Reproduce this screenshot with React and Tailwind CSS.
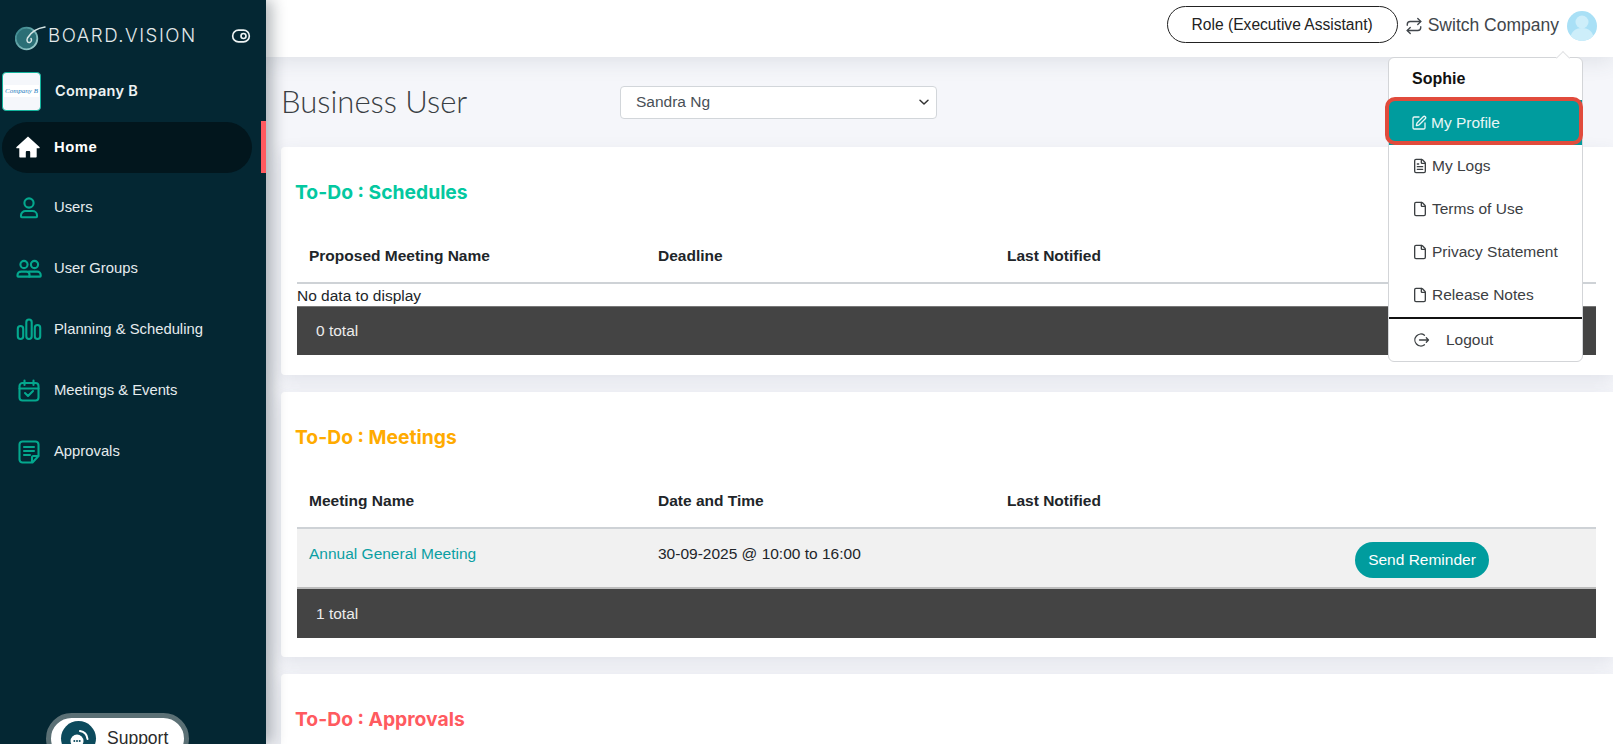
import React from "react";
import { Repeat, SquarePen, FileText, File, ToggleRight } from "lucide-react";

const teal = "#04a88e";
const Ic = ({ children, w = 26, h = 26 }) => (
  <svg width={w} height={h} viewBox="0 0 26 26" fill="none" stroke={teal} strokeWidth="2.1" strokeLinecap="round" strokeLinejoin="round">{children}</svg>
);
const UserIcon = () => (
  <Ic><circle cx="13" cy="8" r="4.6" /><path d="M5 21.5v-1.2c0-2.6 2.2-4.3 4.5-4.3h7c2.3 0 4.5 1.7 4.5 4.3v1.2c0 .4-.3.7-.7.7H5.7c-.4 0-.7-.3-.7-.7z" /></Ic>
);
const GroupIcon = () => (
  <Ic><circle cx="8" cy="8.5" r="3.6" /><circle cx="18.5" cy="8.5" r="3.6" /><path d="M1.5 20v-1c0-2 1.6-3.4 3.6-3.4h5.4c1.8 0 3 1.4 3 3.2V20.6H2.100c-.3 0-.6-.3-.6-.6z" /><path d="M13 15.600h8.200c1.900 0 3.500 1.400 3.500 3.400v1c0 .3-.3.6-.6.6H13" /></Ic>
);
const BarsIcon = () => (
  <Ic><rect x="1.800" y="9" width="5.400" height="13" rx="2.700" /><rect x="10.300" y="2.500" width="5.400" height="19.500" rx="2.700" /><rect x="18.800" y="8" width="5.400" height="14" rx="2.700" /></Ic>
);
const CalIcon = () => (
  <Ic><rect x="3.500" y="5" width="19" height="17.500" rx="3" /><path d="M3.500 10.500h19M8.500 2.500v4.500M17.500 2.500v4.500M9 15l3 3 5-5" /></Ic>
);
const NoteIcon = () => (
  <Ic><path d="M6.500 2.500h13c1.600 0 3 1.300 3 3V17l-6 6.500h-10c-1.600 0-3-1.300-3-3v-15c0-1.700 1.400-3 3-3z" /><path d="M8 8h10M8 12h10M8 16h6M16 23v-4.500c0-.8.6-1.500 1.400-1.500h4.800" /></Ic>
);
const HomeIcon = () => (
  <svg width="24" height="22" viewBox="0 0 24 22">
    <path fillRule="evenodd" fill="#ffffff" d="M12 .5 23.500 11c.5.5.2 1.300-.5 1.300h-2.300V20.500c0 .6-.4 1-1 1H4.300c-.6 0-1-.4-1-1V12.300H1c-.7 0-1-.8-.5-1.300zM9.800 21.500h4.400v-5.200c0-.7-.5-1.200-1.200-1.200h-2c-.7 0-1.200.5-1.200 1.200z" />
  </svg>
);

const NavRow = ({ icon, label }) => (
  <div className="h-[61px] flex items-center">
    <span className="w-[54px] flex justify-center pl-[3px]">{icon}</span>
    <span className="text-[14.8px] text-[#e6ecee]">{label}</span>
  </div>
);

const Th = ({ children, w }) => <div className={`${w} pl-3 font-bold text-[#212529]`}>{children}</div>;

const Head = ({ cols }) => (
  <div className="flex items-center h-[54px] border-b-2 border-[#ced2d6]">
    <Th w="w-[349px]">{cols[0]}</Th>
    <Th w="w-[349px]">{cols[1]}</Th>
    <Th w="flex-1">{cols[2]}</Th>
  </div>
);

const Total = ({ children, h = "h-[49px]" }) => (
  <div className={`${h} bg-[#444444] text-[#ececec] flex items-center pl-[19px]`}>{children}</div>
);

const Card = ({ title, color, h, children }) => (
  <section className={`${h} ml-[15px] bg-white rounded-l shadow-[0_6px_18px_rgba(60,70,100,0.10)] pl-4 pr-[17px]`}>
    <h2 className={`-ml-[2px] pt-[35px] h-[83px] font-['Inter',sans-serif] font-bold text-[19.3px] leading-[21px] ${color}`}>{title}</h2>
    <div>{children}</div>
  </section>
);

const MenuRow = ({ icon, label, h = "h-[43px]" }) => (
  <div className={`${h} flex items-center pl-[23px] gap-[4px] text-[#3c4043]`}>
    {icon}
    <span>{label}</span>
  </div>
);

export default function App() {
  return (
    <div className="flex h-[744px] w-[1613px] overflow-hidden bg-[#f5f6fa] font-['Liberation_Sans',Arial,sans-serif] text-[15.5px] text-[#212529]">
      <aside className="w-[266px] shrink-0 h-full overflow-hidden bg-[#042733] relative z-20 shadow-[6px_0_14px_rgba(20,30,40,0.32)] flex flex-col">
        <div className="h-[72px] shrink-0 flex items-center pl-[15px]">
          <svg width="32" height="32" viewBox="0 0 32 32" fill="none" className="shrink-0">
            <defs>
              <linearGradient id="lg" x1="0" y1="0" x2="1" y2="1">
                <stop offset="0" stopColor="#2f7f86" />
                <stop offset="1" stopColor="#a7d5d4" />
              </linearGradient>
            </defs>
            <circle cx="11.500" cy="18.500" r="10.800" fill="#2b6f76" stroke="url(#lg)" strokeWidth="1.800" />
            <path d="M30 7C23 8 16 12 12.500 18c-1.500 3 .5 5 2.200 4.500s2.300-2.500 1.300-4" stroke="#d7e6e6" strokeWidth="1.500" strokeLinecap="round" />
          </svg>
          <span className="ml-[1px] font-['Inter',sans-serif] font-light text-[#e3e9ea] text-[18.700px] tracking-[1.500px]">BOARD.VISION</span>
          <ToggleRight size={20} color="#eef3f3" strokeWidth={2} className="ml-[34px]" />
        </div>
        <div className="h-[38px] shrink-0 flex items-center pl-[2px]">
          <div className="w-[39px] h-[39px] bg-[#f5f7fb] border border-[#12b39c] rounded-sm flex items-center justify-center">
            <span className="font-['Liberation_Serif',serif] italic text-[7px] text-[#2a7fc0] bg-white px-[1px] leading-[12px]">Company B</span>
          </div>
          <span className="ml-[14px] font-['Inter',sans-serif] font-semibold text-[14.500px] tracking-[0.3px] text-[#eef3f3]">Company B</span>
        </div>
        <div className="mt-[11px] shrink-0 flex items-center relative">
          <div className="w-[250px] h-[51px] ml-[2px] rounded-[26px] bg-[#02161d] flex items-center">
            <span className="w-[52px] flex justify-center"><HomeIcon /></span>
            <span className="font-bold text-[14.800px] text-white tracking-[0.5px]">Home</span>
          </div>
          <div className="w-[5px] h-[52px] ml-[9px] bg-[#ff5a5f]" />
        </div>
        <nav className="mt-[4px] shrink-0">
          <NavRow icon={<UserIcon />} label="Users" />
          <NavRow icon={<GroupIcon />} label="User Groups" />
          <NavRow icon={<BarsIcon />} label="Planning & Scheduling" />
          <NavRow icon={<CalIcon />} label="Meetings & Events" />
          <NavRow icon={<NoteIcon />} label="Approvals" />
        </nav>
        <div className="mt-[231px] ml-[46px] w-[143px] h-[51px] shrink-0 rounded-[26px] bg-white border-[5px] border-[#5b7075] flex items-center pl-[10px]">
          <span className="w-[35px] h-[35px] rounded-full bg-[#0c4a5c] flex items-center justify-center">
            <svg width="22" height="22" viewBox="0 0 22 22" fill="none">
              <circle cx="9" cy="13" r="6.500" fill="#ffffff" />
              <circle cx="6.300" cy="13" r="1" fill="#0c4a5c" /><circle cx="9" cy="13" r="1" fill="#0c4a5c" /><circle cx="11.700" cy="13" r="1" fill="#0c4a5c" />
              <path d="M12 3c4 .5 7 3.500 7.500 8" stroke="#ffffff" strokeWidth="2" strokeLinecap="round" />
            </svg>
          </span>
          <span className="ml-[11px] text-[17.500px] text-[#2a2a2a]">Support</span>
        </div>
      </aside>

      <div className="flex-1 min-w-0 flex flex-col relative">
        <header className="h-[57px] shrink-0 bg-white flex items-center justify-end pr-[16px] relative z-10 shadow-[0_4px_22px_rgba(60,70,90,0.12)]">
          <div className="w-[231px] h-[37px] mb-[8px] rounded-[19px] border border-[#222] flex items-center justify-center text-[15.600px] text-[#222]">Role (Executive Assistant)</div>
          <div className="ml-[7px] mb-[6px] flex items-center gap-[5px] text-[17.500px] text-[#41464b]">
            <Repeat size={18} strokeWidth={1.800} color="#41464b" />
            <span>Switch Company</span>
          </div>
          <span className="ml-[8px] mb-[6px] w-[30px] h-[30px] rounded-full bg-[#a9e0f6] overflow-hidden flex items-center justify-center">
            <svg width="30" height="30" viewBox="0 0 30 30"><circle cx="15" cy="11" r="6.500" fill="#cdeefa" /><path d="M3 30c0-9 5-13 12-13s12 4 12 13z" fill="#cdeefa" /></svg>
          </span>
        </header>

        <main className="flex-1 min-h-0 overflow-hidden">
          <div className="h-[90px] flex items-center ml-[15px]">
            <h1 className="w-[339px] -mt-[2px] font-['Lato',sans-serif] font-light text-[31px] leading-none text-[#3a3f44]">Business User</h1>
            <div className="w-[317px] h-[33px] bg-white border border-[#d2d6da] rounded flex items-center justify-between pl-[15px] pr-[6px] text-[#495057]">
              <span>Sandra Ng</span>
              <svg width="12" height="12" viewBox="0 0 12 12" fill="none"><path d="M2 4.200 6 8l4-3.800" stroke="#333" strokeWidth="1.500" strokeLinecap="round" strokeLinejoin="round" /></svg>
            </div>
          </div>
          <div className="flex flex-col gap-[17px]">
            <Card title="To-Do : Schedules" color="text-[#04c8a0]" h="h-[228px]">
              <Head cols={["Proposed Meeting Name", "Deadline", "Last Notified"]} />
              <div className="h-[23px] leading-[23px] border-b border-[#777]">No data to display</div>
              <Total h="h-[48px]">0 total</Total>
            </Card>
            <Card title="To-Do : Meetings" color="text-[#ffab00]" h="h-[265px]">
              <Head cols={["Meeting Name", "Date and Time", "Last Notified"]} />
              <div className="h-[60px] bg-[#f1f1f1] border-b-2 border-[#bdbdbd] flex items-start relative">
                <div className="w-[349px] pl-3 pt-[13px] text-[#0b9fa3]">Annual General Meeting</div>
                <div className="w-[349px] pl-3 pt-[13px]">30-09-2025 @ 10:00 to 16:00</div>
                <div className="flex-1 flex justify-end pr-[107px] pt-[13px]">
                  <span className="w-[134px] h-[36px] rounded-[18px] bg-[#009c9e] text-white flex items-center justify-center">Send Reminder</span>
                </div>
              </div>
              <Total>1 total</Total>
            </Card>
            <Card title="To-Do : Approvals" color="text-[#ff5a5f]" h="h-[100px]" />
          </div>
        </main>

        <div className="absolute z-30 left-[1122px] top-[57px] w-[195px] h-[305px] bg-white border border-[#d3d5d8] rounded-md">
          <div className="absolute -top-[5px] right-[14px] w-[10px] h-[10px] bg-white rotate-45 border-l border-t border-[#e2e3e5]" />
          <div className="h-[42px] flex items-center pl-[23px] font-bold text-[16px] text-[#111]">Sophie</div>
          <div className="relative h-[45px] bg-[#009c9e] text-[#e8f6f6] flex items-center pl-[22px] gap-[4px]">
            <SquarePen size={16} strokeWidth={2} />
            <span>My Profile</span>
            <div className="absolute -left-[4px] -right-[1px] -top-[3px] bottom-0 rounded-[10px] border-[4px] border-[#e14b3c]" />
          </div>
          <MenuRow icon={<FileText size={16} strokeWidth={2} />} label="My Logs" h="h-[42px]" />
          <MenuRow icon={<File size={16} strokeWidth={2} />} label="Terms of Use" />
          <MenuRow icon={<File size={16} strokeWidth={2} />} label="Privacy Statement" />
          <MenuRow icon={<File size={16} strokeWidth={2} />} label="Release Notes" />
          <div className="mt-[1px] h-[44px] border-t-2 border-[#111] flex items-center pl-[24px] gap-[16px] text-[#3c4043]">
            <svg width="17" height="16" viewBox="0 0 17 16" fill="none" stroke="#3c4043" strokeWidth="1.300" strokeLinecap="round" strokeLinejoin="round">
              <path d="M11.500 3.200A6 6 0 1 0 11.500 12.800" /><path d="M6.500 8h9M13.300 5.800 15.500 8l-2.200 2.200" />
            </svg>
            <span>Logout</span>
          </div>
        </div>
      </div>
    </div>
  );
}
